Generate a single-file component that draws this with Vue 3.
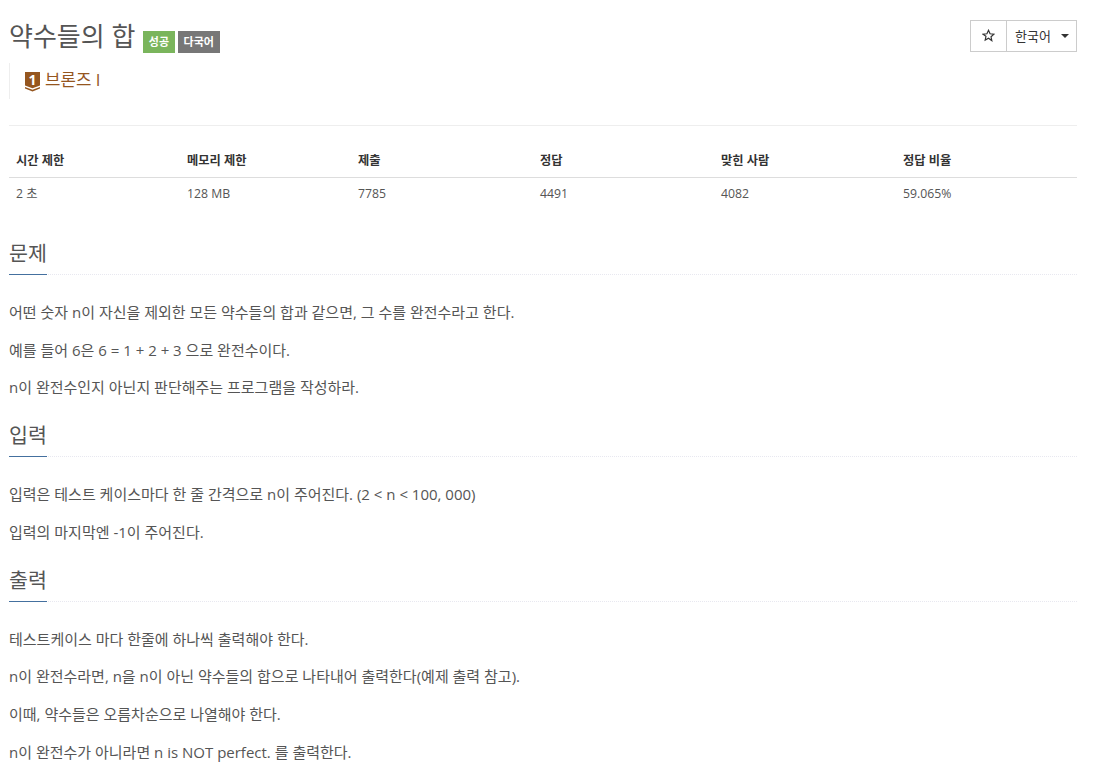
<template>
  <div class="page">
    <div class="head">
      <div class="title-wrap">
        <h1 class="title">약수들의 합<span class="label green">성공</span><span class="label gray">다국어</span></h1>
        <div class="tier">
          <div class="badge">
            <svg width="15" height="20" viewBox="0 0 15 20">
              <path d="M0 0h15v13.500l-7.500 2.700-7.500-2.700z" fill="#95561f" />
              <path d="M0 15l7.500 2.800 7.500-2.800v1.600l-7.500 3-7.500-3z" fill="#95561f" />
            </svg>
            <span class="badge-num">1</span>
          </div>
          <span class="tier-name">브론즈 I</span>
        </div>
      </div>
      <div class="btns">
        <div class="btn star">
          <svg width="13" height="13" viewBox="0 0 24 24">
            <path d="M12 2.500l2.900 6.400 7 .8-5.200 4.700 1.400 6.900L12 17l-6.100 3.300 1.400-6.900L2.100 9.700l7-.8z" fill="none" stroke="#333" stroke-width="2.200" />
          </svg>
        </div>
        <div class="btn lang">한국어<span class="caret"></span></div>
      </div>
    </div>

    <div class="rule"></div>

    <table class="info">
      <thead>
        <tr>
          <th v-for="c in columns" :key="c.name" :style="{ width: c.width + 'px' }">{{ c.name }}</th>
        </tr>
      </thead>
      <tbody>
        <tr>
          <td v-for="c in columns" :key="c.name">{{ c.value }}</td>
        </tr>
      </tbody>
    </table>

    <section v-for="s in sections" :key="s.title" class="section">
      <div class="section-head"><h2>{{ s.title }}</h2></div>
      <p v-for="line in s.lines" :key="line">{{ line }}</p>
    </section>
  </div>
</template>

<script setup>
const columns = [
  { name: '시간 제한', value: '2 초', width: 171 },
  { name: '메모리 제한', value: '128 MB', width: 171 },
  { name: '제출', value: '7785', width: 182 },
  { name: '정답', value: '4491', width: 181 },
  { name: '맞힌 사람', value: '4082', width: 182 },
  { name: '정답 비율', value: '59.065%', width: 181 }
]

const sections = [
  {
    title: '문제',
    lines: [
      '어떤 숫자 n이 자신을 제외한 모든 약수들의 합과 같으면, 그 수를 완전수라고 한다.',
      '예를 들어 6은 6 = 1 + 2 + 3 으로 완전수이다.',
      'n이 완전수인지 아닌지 판단해주는 프로그램을 작성하라.'
    ]
  },
  {
    title: '입력',
    lines: [
      '입력은 테스트 케이스마다 한 줄 간격으로 n이 주어진다. (2 < n < 100, 000)',
      '입력의 마지막엔 -1이 주어진다.'
    ]
  },
  {
    title: '출력',
    lines: [
      '테스트케이스 마다 한줄에 하나씩 출력해야 한다.',
      'n이 완전수라면, n을 n이 아닌 약수들의 합으로 나타내어 출력한다(예제 출력 참고).',
      '이때, 약수들은 오름차순으로 나열해야 한다.',
      'n이 완전수가 아니라면 n is NOT perfect. 를 출력한다.'
    ]
  }
]
</script>

<style>
html, body {
  background: #fff;
  overflow: hidden;
}
</style>

<style scoped>
.page {
  box-sizing: border-box;
  width: 1094px;
  height: 774px;
  padding: 0 17px 0 9px;
  overflow: hidden;
  font-family: "Open Sans", "Noto Sans CJK KR", sans-serif;
  font-size: 15px;
  color: #555;
}
.head {
  display: flex;
  justify-content: space-between;
  align-items: flex-start;
  padding-top: 20px;
}
.title {
  margin: 0;
  font-size: 26px;
  font-weight: 400;
  line-height: 32px;
  color: #555;
}
.label {
  display: inline-block;
  font-size: 11px;
  font-weight: 700;
  line-height: 22px;
  height: 22px;
  padding: 0 6px;
  color: #fff;
  vertical-align: 0;
  margin-left: 3px;
}
.label.green {
  margin-left: 8px;
  padding: 0 5.5px;
}
.green {
  background: #7ab55c;
}
.gray {
  background: #777;
}
.tier {
  display: flex;
  align-items: center;
  gap: 5px;
  height: 36px;
  margin-top: 10px;
  padding-left: 15px;
  border-left: 1px solid #eee;
  font-size: 16.8px;
  color: #95561f;
}
.tier-name {
  margin-bottom: 4px;
}
.badge {
  position: relative;
  width: 15px;
  height: 20px;
  margin-top: 2px;
}
.badge svg {
  display: block;
}
.badge-num {
  position: absolute;
  left: 0;
  top: 0;
  width: 15px;
  text-align: center;
  font-size: 14px;
  line-height: 15px;
  font-weight: 700;
  color: #fff;
}
.btns {
  display: flex;
  font-size: 13px;
  color: #333;
}
.btn {
  box-sizing: border-box;
  border: 1px solid #ccc;
  display: flex;
  align-items: center;
  height: 32px;
  padding-bottom: 2px;
}
.star {
  width: 37px;
  justify-content: center;
}
.lang {
  margin-left: -1px;
  width: 71px;
  padding-left: 8px;
  gap: 10px;
}
.caret {
  margin-top: 1px;
  width: 0;
  height: 0;
  border-top: 4px solid #333;
  border-left: 4px solid transparent;
  border-right: 4px solid transparent;
}
.rule {
  border-top: 1px solid #eee;
  margin-top: 26px;
}
.info {
  width: 100%;
  border-collapse: collapse;
  table-layout: fixed;
  margin-top: 17px;
  font-size: 12.25px;
  color: #333;
}
.info th {
  box-sizing: border-box;
  text-align: left;
  font-weight: 700;
  padding: 9px 7px 7px;
  line-height: 18px;
  border-bottom: 1px solid #ddd;
  color: #333;
}
.info td {
  padding: 7px 7px 8px;
  line-height: 17px;
  color: #555;
}
.section {
  margin-top: 21.2px;
}
.info + .section {
  margin-top: 31px;
}
.section-head {
  border-bottom: 1px dotted #e8e8f0;
  margin-bottom: 24px;
}
.section-head h2 {
  display: inline-block;
  margin: 0 0 -1px;
  padding-bottom: 9px;
  font-size: 20.6px;
  font-weight: 400;
  line-height: 24px;
  color: #555;
  border-bottom: 1px solid #44709f;
}
p {
  margin: 0 0 10px;
  line-height: 27.67px;
}
</style>
